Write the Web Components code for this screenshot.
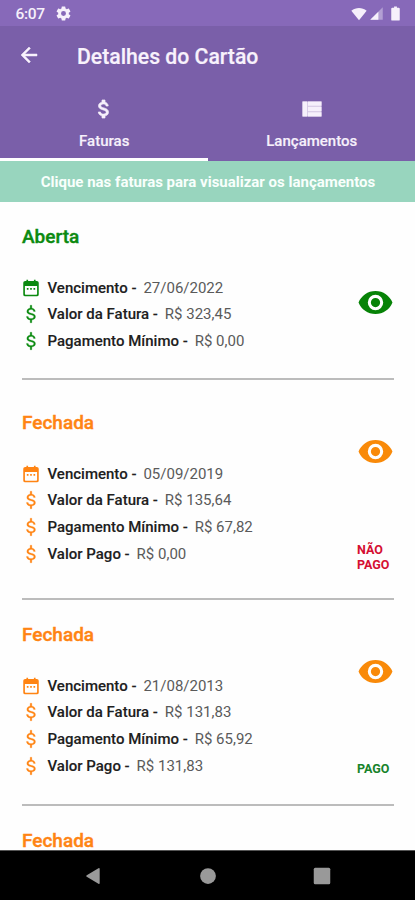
<!DOCTYPE html>
<html lang="pt-BR">
<head>
<meta charset="utf-8">
<title>Detalhes do Cartão</title>
<style>
html,body{margin:0;padding:0}
body{width:415px;height:900px;overflow:hidden;background:#fefefe;font-family:Roboto,"Liberation Sans",sans-serif}
</style>
</head>
<body>
<card-screen></card-screen>
<script>
const define=(name,html,setup)=>customElements.define(name,class extends HTMLElement{
  connectedCallback(){
    if(this.shadowRoot)return;
    const t=document.createElement('template');
    t.innerHTML=html;
    this.attachShadow({mode:'open'}).append(t.content.cloneNode(true));
    if(setup)setup(this,this.shadowRoot);
  }
});

const icons={
  back:'<path stroke="currentColor" stroke-width=".5" d="M20 11H7.83l5.59-5.59L12 4l-8 8 8 8 1.41-1.41L7.83 13H20z"/>',
  gear:'<path d="M19.43 12.98c.04-.32.07-.64.07-.98s-.03-.66-.07-.98l2.11-1.65c.19-.15.24-.42.12-.64l-2-3.46c-.12-.22-.39-.3-.61-.22l-2.49 1c-.52-.4-1.08-.73-1.69-.98l-.38-2.65A.488.488 0 0 0 14 2h-4c-.25 0-.46.18-.49.42l-.38 2.65c-.61.25-1.17.59-1.69.98l-2.49-1c-.23-.09-.49 0-.61.22l-2 3.46c-.13.22-.07.49.12.64l2.11 1.65c-.04.32-.07.65-.07.98s.03.66.07.98l-2.11 1.65c-.19.15-.24.42-.12.64l2 3.46c.12.22.39.3.61.22l2.49-1c.52.4 1.08.73 1.69.98l.38 2.65c.03.24.24.42.49.42h4c.25 0 .46-.18.49-.42l.38-2.65c.61-.25 1.17-.59 1.69-.98l2.49 1c.23.09.49 0 .61-.22l2-3.46c.12-.22.07-.49-.12-.64zM12 15.5a3.5 3.5 0 1 1 0-7 3.5 3.5 0 0 1 0 7z"/>',
  dollar:'<path stroke="currentColor" stroke-width=".7" d="M11.8 10.9c-2.27-.59-3-1.2-3-2.15 0-1.09 1.01-1.85 2.7-1.85 1.78 0 2.44.85 2.5 2.1h2.21c-.07-1.72-1.12-3.3-3.21-3.81V3h-3v2.16c-1.94.42-3.5 1.68-3.5 3.61 0 2.31 1.91 3.46 4.7 4.13 2.5.6 3 1.48 3 2.41 0 .69-.49 1.79-2.7 1.79-2.06 0-2.87-.92-2.98-2.1h-2.2c.12 2.19 1.76 3.42 3.68 3.83V21h3v-2.15c1.95-.37 3.5-1.5 3.5-3.55 0-2.84-2.43-3.81-4.7-4.4z"/>',
  dollarThin:'<path stroke="currentColor" stroke-width=".3" d="M11 1.500h2v3.300c2.400.4 4 1.900 4.200 4.100h-2.100c-.2-1.500-1.200-2.300-3.100-2.300-1.800 0-2.900.9-2.900 2.200 0 1.200.9 1.800 3.100 2.300 3.500.8 5.200 1.900 5.200 4.200 0 2.100-1.700 3.500-4.400 3.900v3.300h-2v-3.300c-2.700-.4-4.400-2-4.500-4.300h2.100c.2 1.700 1.500 2.500 3.500 2.500s3.200-.8 3.200-2.100c0-1.200-.9-1.800-3.300-2.400C8.500 12.100 7 11 7 8.900c0-2.100 1.600-3.700 4-4.100z"/>',
  list:'<path d="M2.500 4.500h4.600v15H2.500zM7.900 4.500h13.600v4.300H7.900zm0 5.300h13.600v4.400H7.900zm0 5.400h13.600v4.300H7.900z"/><path opacity=".7" d="M2.500 4.500h19v15h-19z"/>',
  calendar:'<path fill-rule="evenodd" d="M19 3.500h-1.500V2h-2v1.500h-7V2h-2v1.500H5a2.300 2.300 0 0 0-2.300 2.200v14A2.300 2.300 0 0 0 5 22h14a2.300 2.300 0 0 0 2.300-2.300v-14A2.300 2.300 0 0 0 19 3.500zM4.700 9.500h14.600v9.700a1 1 0 0 1-1 1H5.700a1 1 0 0 1-1-1z"/><path d="M7 12h2v2H7zm4 0h2v2h-2zm4 0h2v2h-2z"/>',
  eye:'<path d="M12 4.500C7 4.500 2.730 7.610 1 12c1.730 4.390 6 7.500 11 7.500s9.270-3.110 11-7.500c-1.730-4.390-6-7.500-11-7.500zM12 17a5 5 0 1 1 0-10 5 5 0 0 1 0 10zm0-8a3 3 0 1 0 0 6 3 3 0 0 0 0-6z"/>',
  wifi:'<path d="M12 21.500 0.500 7C4 4.200 8 3 12 3s8 1.200 11.500 4z"/>',
  signal:'<path opacity=".4" d="M2 22h20V2z"/><path d="M2 22h13V9z"/>',
  battery:'<path d="M15.700 4H14V2h-4v2H8.300C7 4 6 4.600 6 5.300v15.400c0 .7.600 1.300 1.300 1.300h9.400c.7 0 1.300-.6 1.300-1.300V5.300c0-.7-1-1.300-2.300-1.300z"/>',
  triangle:'<path d="M20 3.500v17a1 1 0 0 1-1.500.800L4.500 13a1.200 1.200 0 0 1 0-2L18.500 2.700A1 1 0 0 1 20 3.500z"/>',
  circle:'<circle cx="12" cy="12" r="10.500"/>',
  square:'<rect x="1" y="1" width="22" height="22" rx="2"/>'
};
define('ui-icon','<style>:host{display:block;flex:none}svg{display:block;width:100%;height:100%;fill:currentColor}</style><svg viewBox="0 0 24 24" aria-hidden="true"></svg>',
  (h,r)=>{r.querySelector('svg').innerHTML=icons[h.getAttribute('name')]});

define('status-bar',`<style>
:host{display:flex;align-items:center;height:26px;box-sizing:border-box;padding:1px 13px 0 15.500px;background:#8769b9;color:#f6f0fb}
.time{font-size:15.500px;line-height:20px;font-weight:500;width:39.500px;letter-spacing:-.3px}
.gear{width:17px;height:17px}
.wifi{width:18px;height:16px;margin-left:auto}
.signal{width:15px;height:15px;margin-left:1px}
.battery{width:17px;height:17px;margin-left:3px;margin-right:-2px}
</style><span class="time">6:07</span><ui-icon class="gear" name="gear"></ui-icon><ui-icon class="wifi" name="wifi"></ui-icon><ui-icon class="signal" name="signal"></ui-icon><ui-icon class="battery" name="battery"></ui-icon>`);

define('app-bar',`<style>
:host{display:flex;align-items:center;height:62px;box-sizing:border-box;padding:0 0 3px 17px;background:#7a5fa9;color:#f8f2fc}
ui-icon{width:24px;height:24px;margin-bottom:1px}
h1{margin:2px 0 0 36px;font-size:21.200px;line-height:30px;font-weight:500;white-space:nowrap;-webkit-text-stroke:.2px}
</style><ui-icon name="back"></ui-icon><h1><slot></slot></h1>`);

define('tab-item',`<style>
:host{display:flex;flex-direction:column;align-items:center;flex:1;height:73px;box-sizing:border-box;padding:9px 0 0 1px;background:#7a5fa9;color:#f6f0fb;border-bottom:3px solid transparent}
:host([active]){border-bottom-color:#fff}
ui-icon{width:24px;height:24px}
span{margin-top:10px;font-size:15px;line-height:20px;font-weight:500;-webkit-text-stroke:.15px}
</style><ui-icon></ui-icon><span><slot></slot></span>`,(h,r)=>{
  const i=document.createElement('ui-icon');i.setAttribute('name',h.getAttribute('icon'));r.querySelector('ui-icon').replaceWith(i)});

define('info-banner',`<style>
:host{display:flex;align-items:center;justify-content:center;height:41px;padding:1px 0 0 1px;box-sizing:border-box;background:#98d5be;color:#f8fffc;font-size:15px;font-weight:700;white-space:nowrap}
</style><slot></slot>`);

define('invoice-row',`<style>
:host{display:flex;align-items:center;height:26.650px;white-space:nowrap;font-size:15px;line-height:20px}
ui-icon{width:20px;height:20px;margin:0 6.500px 0 -1px;color:var(--tone)}
b{font-weight:500;color:#202020;-webkit-text-stroke:.1px}
.value{color:#5a5a5a;margin-left:6.900px;font-weight:400}
</style><ui-icon></ui-icon><b></b><span class="value"><slot></slot></span>`,(h,r)=>{
  const i=document.createElement('ui-icon');i.setAttribute('name',h.getAttribute('icon')||'dollarThin');r.querySelector('ui-icon').replaceWith(i);
  r.querySelector('b').textContent=h.getAttribute('label')+' -'});

define('invoice-card',`<style>
:host{display:grid;grid-template-columns:1fr 37px;box-sizing:border-box;margin:0 21px 0 22px;padding:var(--top,23px) 0 var(--bottom,24px);border-bottom:2px solid #bcbcbc;--tone:#ff8413}
:host([open]){--tone:#0b8a10}
:host([last]){border:0}
h2{margin:0;font-size:19px;line-height:var(--lh,24px);font-weight:500;color:var(--tone);-webkit-text-stroke:.4px}
.rows{margin-top:var(--gap,26px)}
:host([last]) .rows{display:none}
aside{display:flex;flex-direction:column}
ui-icon{width:37px;height:37px;margin-top:var(--eye,0);color:var(--eye-tone,#f98a09)}
:host([open]) ui-icon{color:#078307}
.state{margin-top:auto;margin-bottom:var(--state,0);font-size:12.500px;line-height:15px;font-weight:700}
::slotted([slot=state]){display:block}
</style><div><h2></h2><div class="rows"><slot></slot></div></div><aside><ui-icon name="eye"></ui-icon><div class="state"><slot name="state"></slot></div></aside>`,(h,r)=>{
  r.querySelector('h2').textContent=h.getAttribute('heading');
  if(h.hasAttribute('last'))r.querySelector('aside').remove()});

define('nav-bar',`<style>
:host{display:flex;align-items:center;justify-content:space-between;height:50px;box-sizing:border-box;padding:0 84px 0 83px;background:#000;border-top:1px solid #555;color:#999}
ui-icon{width:18px;height:18px}
.t{width:20px;height:20px}
</style><ui-icon class="t" name="triangle"></ui-icon><ui-icon name="circle"></ui-icon><ui-icon name="square"></ui-icon>`);

define('card-screen',`<style>
:host{display:flex;flex-direction:column;width:415px;height:900px;overflow:hidden}
nav{display:flex;background:#7a5fa9}
main{flex:1;min-height:0;overflow:hidden;background:#fefefe}
.a{--top:23px;--gap:25.400px;--bottom:23.600px;--eye:59px}
.b{--top:31px;--gap:25.400px;--bottom:31.600px;--eye:22px;--state:-5px}
.c{--top:23px;--gap:24.900px;--bottom:25.100px;--eye:30px;--state:3px}
.d{--top:26px;--lh:18px}
.no{color:#d50f32}.yes{color:#17832b}
</style>
<status-bar></status-bar>
<app-bar>Detalhes do Cartão</app-bar>
<nav><tab-item icon="dollar" active>Faturas</tab-item><tab-item icon="list">Lançamentos</tab-item></nav>
<info-banner>Clique nas faturas para visualizar os lançamentos</info-banner>
<main>
<invoice-card class="a" heading="Aberta" open>
<invoice-row icon="calendar" label="Vencimento">27/06/2022</invoice-row>
<invoice-row label="Valor da Fatura">R$ 323,45</invoice-row>
<invoice-row label="Pagamento Mínimo">R$ 0,00</invoice-row>
</invoice-card>
<invoice-card class="b" heading="Fechada">
<invoice-row icon="calendar" label="Vencimento">05/09/2019</invoice-row>
<invoice-row label="Valor da Fatura">R$ 135,64</invoice-row>
<invoice-row label="Pagamento Mínimo">R$ 67,82</invoice-row>
<invoice-row label="Valor Pago">R$ 0,00</invoice-row>
<span slot="state" class="no">NÃO<br>PAGO</span>
</invoice-card>
<invoice-card class="c" heading="Fechada">
<invoice-row icon="calendar" label="Vencimento">21/08/2013</invoice-row>
<invoice-row label="Valor da Fatura">R$ 131,83</invoice-row>
<invoice-row label="Pagamento Mínimo">R$ 65,92</invoice-row>
<invoice-row label="Valor Pago">R$ 131,83</invoice-row>
<span slot="state" class="yes">PAGO</span>
</invoice-card>
<invoice-card class="d" heading="Fechada" last></invoice-card>
</main>
<nav-bar></nav-bar>`);
</script>
</body>
</html>
